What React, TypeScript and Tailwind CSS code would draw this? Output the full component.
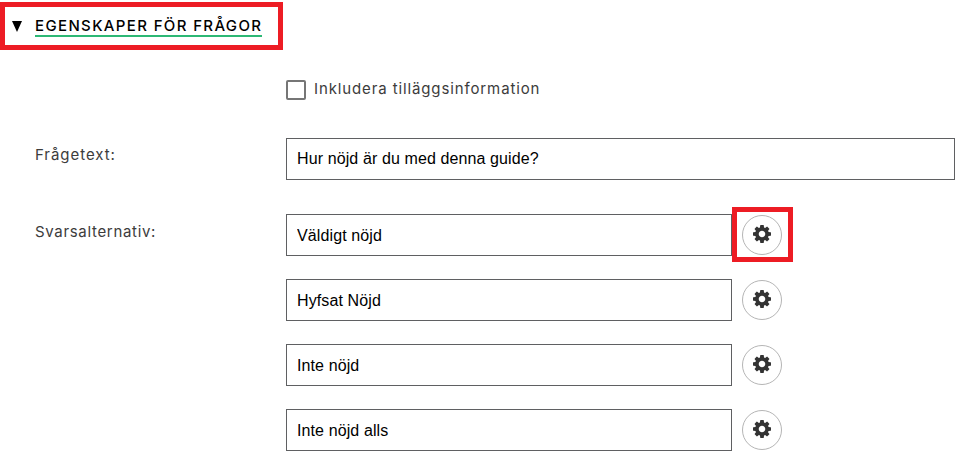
const answerOptions = ["Väldigt nöjd", "Hyfsat Nöjd", "Inte nöjd", "Inte nöjd alls"];

const inputClasses =
  "h-[42px] border border-[#5f6062] bg-white px-2.5 font-['Liberation_Sans',Arial,sans-serif] text-base tracking-[0.11px] text-black outline-none";

const labelClasses = "w-[251px] shrink-0 text-[15px] leading-5 text-[#3c3c3c]";

function GearIcon() {
  return (
    <svg viewBox="128 128 1536 1536" className="size-[18px] fill-[#333333]" aria-hidden="true">
      <path d="M1176 896q0-116-82-198t-198-82-198 82-82 198 82 198 198 82 198-82 82-198zm488-109v222q0 12-8 23t-20 13l-185 28q-19 54-39 91 35 50 107 138 10 12 10 25t-9 23q-27 37-99 108t-94 71q-12 0-26-9l-138-108q-44 23-91 38-16 136-29 186-7 28-36 28h-222q-14 0-24.5-8.5t-11.5-21.5l-28-184q-49-16-90-37l-141 107q-10 9-25 9-14 0-25-11-126-114-165-168-7-10-7-23 0-12 8-23 15-21 51-66.5t54-70.5q-27-50-41-99l-183-27q-13-2-21-12.5t-8-23.5v-222q0-12 8-23t19-13l186-28q14-46 39-92-40-57-107-138-10-12-10-24 0-10 9-23 26-36 98.5-107.5t94.5-71.5q13 0 26 10l138 107q44-23 91-38 16-136 29-186 7-28 36-28h222q14 0 24.5 8.5t11.5 21.5l28 184q49 16 90 37l142-107q9-9 24-9 13 0 25 10 129 119 165 170 7 8 7 22 0 12-8 23-15 21-51 66.5t-54 70.5q26 50 41 98l183 28q13 2 21 12.5t8 23.5z" />
    </svg>
  );
}

type AnswerRowProps = {
  value: string;
  highlighted: boolean;
};

function AnswerRow({ value, highlighted }: AnswerRowProps) {
  return (
    <div className="flex items-center">
      <input
        type="text"
        defaultValue={value}
        className={`${inputClasses} w-[446px] pt-0.5`}
      />
      <div className="relative ml-2.5">
        {highlighted && (
          <span className="pointer-events-none absolute -left-2.5 -top-2 h-[55px] w-[61px] border-[5px] border-[#ed1c24]" />
        )}
        <button
          type="button"
          aria-label="Inställningar"
          className="flex size-10 items-center justify-center rounded-full border border-[#b5b5b5] bg-white pb-0.5 pr-px"
        >
          <GearIcon />
        </button>
      </div>
    </div>
  );
}

export default function App() {
  return (
    <div className="h-[466px] w-[969px] overflow-hidden bg-white pt-0.5 font-['Inter',sans-serif]">
      <div className="flex h-12 w-[283px] border-[5px] border-[#ed1c24] pl-[7px] pt-2.5">
        <svg viewBox="0 0 10 11" className="mt-1 h-[11px] w-2.5 fill-black" aria-hidden="true">
          <path d="M0 0h10L5 11z" />
        </svg>
        <h2 className="ml-[13px] h-5 w-[227px] whitespace-nowrap border-b-2 border-[#2db875] text-[15px] font-medium leading-[18px] tracking-[1.36px] text-black">
          EGENSKAPER FÖR FRÅGOR
        </h2>
      </div>

      <label className="ml-[286px] mt-[30px] flex h-5 items-center">
        <input
          type="checkbox"
          className="size-5 appearance-none rounded-xs border-2 border-[#767676] bg-white"
        />
        <span className="ml-2 pb-0.5 text-[15px] leading-5 tracking-[0.88px] text-[#3c3c3c]">
          Inkludera tilläggsinformation
        </span>
      </label>

      <div className="mt-[38px] flex pl-[35px]">
        <label htmlFor="fragetext" className={`${labelClasses} pt-[7px] tracking-[0.95px]`}>
          Frågetext:
        </label>
        <input
          id="fragetext"
          type="text"
          defaultValue="Hur nöjd är du med denna guide?"
          className={`${inputClasses} w-[669px]`}
        />
      </div>

      <div className="mt-[34px] flex pl-[35px]">
        <div className={`${labelClasses} pt-[8px] tracking-[0.68px]`}>Svarsalternativ:</div>
        <div className="flex flex-col gap-[23px]">
          {answerOptions.map((option, index) => (
            <AnswerRow key={option} value={option} highlighted={index === 0} />
          ))}
        </div>
      </div>
    </div>
  );
}
